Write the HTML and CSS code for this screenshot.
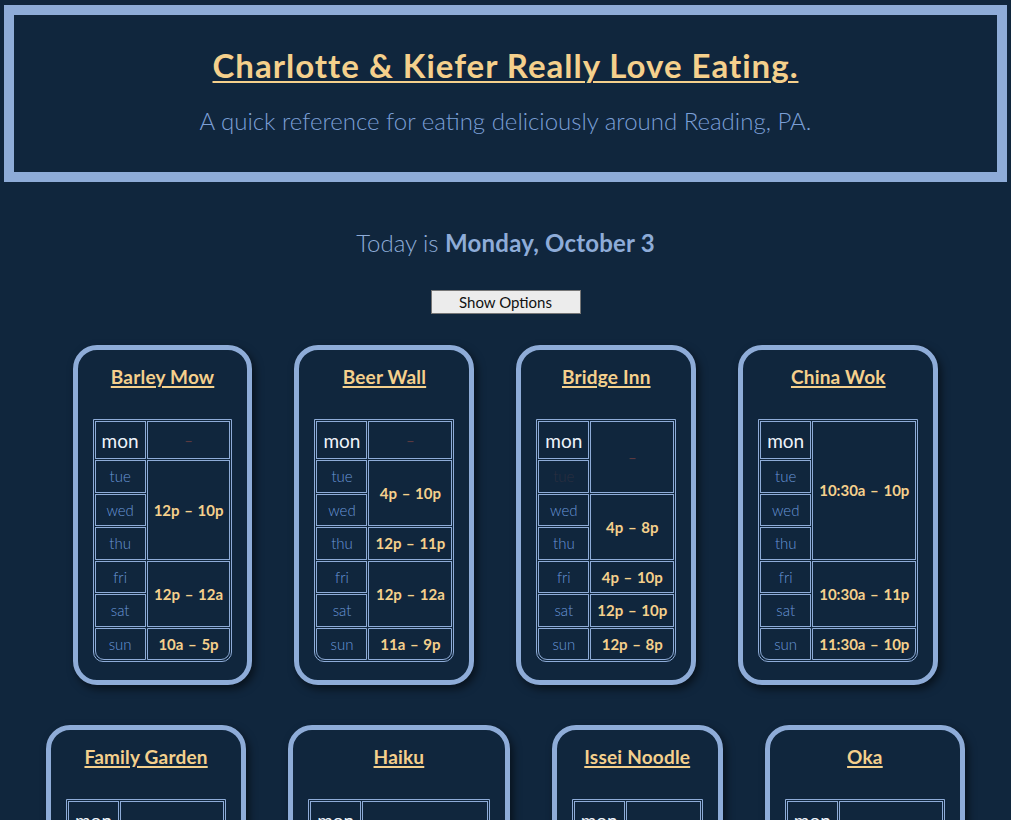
FILE: index.html
```html
<!DOCTYPE html>
<html lang="en">
<head>
<meta charset="utf-8">
<title>Charlotte &amp; Kiefer Really Love Eating.</title>
<link rel="stylesheet" href="styles.css">
</head>
<body>
<header class="masthead">
  <h1 class="site-title"><a href="#">Charlotte &amp; Kiefer Really Love Eating.</a></h1>
  <p class="tagline">A quick reference for eating deliciously around Reading, PA.</p>
</header>

<p class="today">Today is <strong>Monday, October 3</strong></p>
<div class="options"><button class="options-btn" type="button">Show Options</button></div>

<main class="cards">
  <section class="card">
    <h2 class="card-title"><a href="#">Barley Mow</a></h2>
    <table class="hours">
      <tr class="is-today"><td class="day">mon</td><td class="time closed">–</td></tr>
      <tr><td class="day">tue</td><td class="time" rowspan="3">12p – 10p</td></tr>
      <tr><td class="day">wed</td></tr>
      <tr><td class="day">thu</td></tr>
      <tr><td class="day">fri</td><td class="time" rowspan="2">12p – 12a</td></tr>
      <tr><td class="day">sat</td></tr>
      <tr><td class="day">sun</td><td class="time">10a – 5p</td></tr>
    </table>
  </section>

  <section class="card">
    <h2 class="card-title"><a href="#">Beer Wall</a></h2>
    <table class="hours">
      <tr class="is-today"><td class="day">mon</td><td class="time closed">–</td></tr>
      <tr><td class="day">tue</td><td class="time" rowspan="2">4p – 10p</td></tr>
      <tr><td class="day">wed</td></tr>
      <tr><td class="day">thu</td><td class="time">12p – 11p</td></tr>
      <tr><td class="day">fri</td><td class="time" rowspan="2">12p – 12a</td></tr>
      <tr><td class="day">sat</td></tr>
      <tr><td class="day">sun</td><td class="time">11a – 9p</td></tr>
    </table>
  </section>

  <section class="card">
    <h2 class="card-title"><a href="#">Bridge Inn</a></h2>
    <table class="hours">
      <tr class="is-today"><td class="day">mon</td><td class="time closed" rowspan="2">–</td></tr>
      <tr><td class="day off">tue</td></tr>
      <tr><td class="day">wed</td><td class="time" rowspan="2">4p – 8p</td></tr>
      <tr><td class="day">thu</td></tr>
      <tr><td class="day">fri</td><td class="time">4p – 10p</td></tr>
      <tr><td class="day">sat</td><td class="time">12p – 10p</td></tr>
      <tr><td class="day">sun</td><td class="time">12p – 8p</td></tr>
    </table>
  </section>

  <section class="card">
    <h2 class="card-title"><a href="#">China Wok</a></h2>
    <table class="hours">
      <tr class="is-today"><td class="day">mon</td><td class="time" rowspan="4">10:30a – 10p</td></tr>
      <tr><td class="day">tue</td></tr>
      <tr><td class="day">wed</td></tr>
      <tr><td class="day">thu</td></tr>
      <tr><td class="day">fri</td><td class="time" rowspan="2">10:30a – 11p</td></tr>
      <tr><td class="day">sat</td></tr>
      <tr><td class="day">sun</td><td class="time">11:30a – 10p</td></tr>
    </table>
  </section>

  <section class="card">
    <h2 class="card-title"><a href="#">Family Garden</a></h2>
    <table class="hours">
      <tr class="is-today"><td class="day">mon</td><td class="time" rowspan="4">11a – 9:30p</td></tr>
      <tr><td class="day">tue</td></tr>
      <tr><td class="day">wed</td></tr>
      <tr><td class="day">thu</td></tr>
      <tr><td class="day">fri</td><td class="time" rowspan="2">11a – 10:30p</td></tr>
      <tr><td class="day">sat</td></tr>
      <tr><td class="day">sun</td><td class="time">12p – 9:30p</td></tr>
    </table>
  </section>

  <section class="card">
    <h2 class="card-title"><a href="#">Haiku</a></h2>
    <table class="hours">
      <tr class="is-today"><td class="day">mon</td><td class="time" rowspan="4">11:30a – 9:30p</td></tr>
      <tr><td class="day">tue</td></tr>
      <tr><td class="day">wed</td></tr>
      <tr><td class="day">thu</td></tr>
      <tr><td class="day">fri</td><td class="time" rowspan="2">11:30a – 10:30p</td></tr>
      <tr><td class="day">sat</td></tr>
      <tr><td class="day">sun</td><td class="time">12p – 9p</td></tr>
    </table>
  </section>

  <section class="card">
    <h2 class="card-title"><a href="#">Issei Noodle</a></h2>
    <table class="hours">
      <tr class="is-today"><td class="day">mon</td><td class="time" rowspan="4">11a – 9p</td></tr>
      <tr><td class="day">tue</td></tr>
      <tr><td class="day">wed</td></tr>
      <tr><td class="day">thu</td></tr>
      <tr><td class="day">fri</td><td class="time" rowspan="2">11a – 9p</td></tr>
      <tr><td class="day">sat</td></tr>
      <tr><td class="day">sun</td><td class="time">12p – 8p</td></tr>
    </table>
  </section>

  <section class="card">
    <h2 class="card-title"><a href="#">Oka</a></h2>
    <table class="hours">
      <tr class="is-today"><td class="day">mon</td><td class="time" rowspan="4">11:30a – 9p</td></tr>
      <tr><td class="day">tue</td></tr>
      <tr><td class="day">wed</td></tr>
      <tr><td class="day">thu</td></tr>
      <tr><td class="day">fri</td><td class="time" rowspan="2">11:30a – 10p</td></tr>
      <tr><td class="day">sat</td></tr>
      <tr><td class="day">sun</td><td class="time">12p – 9p</td></tr>
    </table>
  </section>
</main>
</body>
</html>
```

FILE: styles.css
```css
html, body {
  margin: 0;
  padding: 0;
}

body {
  background: #10263d;
  font-family: "Lato", "Open Sans", sans-serif;
  color: #8eacd8;
}

a {
  color: #f5d08c;
  text-decoration: underline;
  text-underline-offset: 3px;
  text-decoration-thickness: 2px;
}

.masthead {
  margin: 5px 4px 0;
  border: 10px solid #8eacd8;
  padding: 30px 0 37px;
  text-align: center;
}

.site-title {
  margin: 0;
  font-size: 33px;
  line-height: 40px;
  font-weight: 700;
  letter-spacing: 1px;
}

.tagline {
  margin: 21px 0 0;
  font-size: 24px;
  line-height: 29px;
  font-weight: 300;
  color: #7b9fd6;
}

.today {
  margin: 46px 0 0;
  text-align: center;
  font-size: 24px;
  line-height: 29px;
  font-weight: 300;
  color: #8eacd8;
}

.today strong {
  font-weight: 700;
  letter-spacing: 0.2px;
}

.options {
  margin-top: 33px;
  text-align: center;
}

.options-btn {
  width: 150px;
  height: 24px;
  padding: 0;
  border: 1px solid #767676;
  background: #ececec;
  color: #111;
  font-family: "Lato", sans-serif;
  font-size: 15px;
}

.cards {
  display: flex;
  flex-wrap: wrap;
  justify-content: center;
  align-items: flex-start;
  gap: 40px 42px;
  margin-top: 31px;
  padding: 0 30px 40px;
}

.card {
  border: 5px solid #8eacd8;
  border-radius: 24px;
  padding: 15px 15px 18px;
  box-shadow: 3px 4px 8px rgba(0, 0, 0, 0.55);
  background: #10263d;
}

.card-title {
  margin: 0 0 31px;
  text-align: center;
  font-size: 19px;
  line-height: 23px;
  font-weight: 700;
  letter-spacing: 0.2px;
}

.card-title a {
  text-underline-offset: 2px;
  text-decoration-thickness: 1.5px;
}

.hours {
  border: 1px solid #8eacd8;
  border-spacing: 1px;
  border-radius: 0 0 10px 10px;
}

.hours tr {
  height: 32.5px;
}

.hours tr.is-today {
  height: 38px;
}

.hours td {
  border: 1px solid #8eacd8;
  text-align: center;
  vertical-align: middle;
  padding: 0 6px;
}

.hours tr:last-child td:first-child {
  border-bottom-left-radius: 9px;
}

.hours tr:last-child td:last-child {
  border-bottom-right-radius: 9px;
}

.day {
  font-size: 15px;
  font-weight: 300;
  color: #6996d8;
}

.is-today .day {
  font-size: 19px;
  font-weight: 400;
  color: #eef3fa;
}

.day.off {
  color: #2c2f40;
}

.time {
  font-size: 15px;
  font-weight: 700;
  color: #f5d08c;
  white-space: nowrap;
  word-spacing: 1px;
  padding: 0 7px;
}

.time.closed {
  font-weight: 400;
  color: #5b3a40;
}
```
